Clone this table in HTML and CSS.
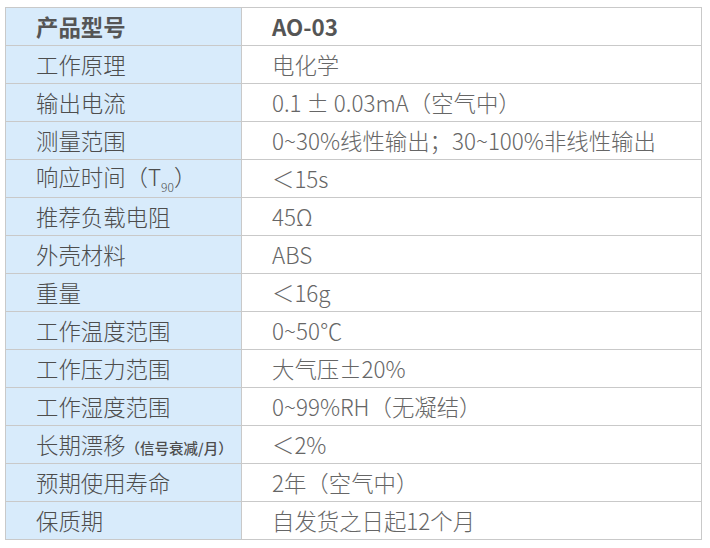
FILE: index.html
```html
<!DOCTYPE html>
<html lang="zh">
<head>
<meta charset="utf-8">
<link rel="stylesheet" href="styles.css">
</head>
<body>
<table class="spec">
  <tr class="head"><th>产品型号</th><td>AO-03</td></tr>
  <tr><th>工作原理</th><td>电化学</td></tr>
  <tr><th>输出电流</th><td>0.1 ± 0.03mA（空气中）</td></tr>
  <tr><th>测量范围</th><td>0~30%线性输出；30~100%非线性输出</td></tr>
  <tr><th>响应时间（T<sub class="sub">90</sub>）</th><td>＜15s</td></tr>
  <tr><th>推荐负载电阻</th><td>45Ω</td></tr>
  <tr><th>外壳材料</th><td>ABS</td></tr>
  <tr><th>重量</th><td>＜16g</td></tr>
  <tr><th>工作温度范围</th><td>0~50℃</td></tr>
  <tr><th>工作压力范围</th><td>大气压±20%</td></tr>
  <tr><th>工作湿度范围</th><td>0~99%RH（无凝结）</td></tr>
  <tr><th>长期漂移<span class="note">（信号衰减/月）</span></th><td>＜2%</td></tr>
  <tr><th>预期使用寿命</th><td>2年（空气中）</td></tr>
  <tr><th>保质期</th><td>自发货之日起12个月</td></tr>
</table>
</body>
</html>
```
FILE: styles.css
```css
html, body {
  margin: 0;
  padding: 0;
  background: #ffffff;
}
body {
  padding: 7px 0 0 5px;
  font-family: "Noto Sans CJK SC", "Noto Sans", sans-serif;
}
.spec {
  border-collapse: collapse;
  width: 697px;
  table-layout: fixed;
}
.spec th, .spec td {
  border: 1px solid #c9c9c9;
  height: 38px;
  padding: 0 0 0 30px;
  text-align: left;
  font-size: 22.4px;
  line-height: 1;
  white-space: nowrap;
  box-sizing: border-box;
}
.spec th {
  width: 236px;
  background: #d8ebfb;
  color: #4d4d4d;
  font-weight: 300;
}
.spec td {
  color: #666666;
  font-weight: 300;
}
.spec .head th, .spec .head td {
  font-weight: 700;
  color: #555555;
}
.sub {
  font-size: 12px;
  vertical-align: -6px;
}
.note {
  font-size: 14.5px;
  font-weight: 500;
}
```
